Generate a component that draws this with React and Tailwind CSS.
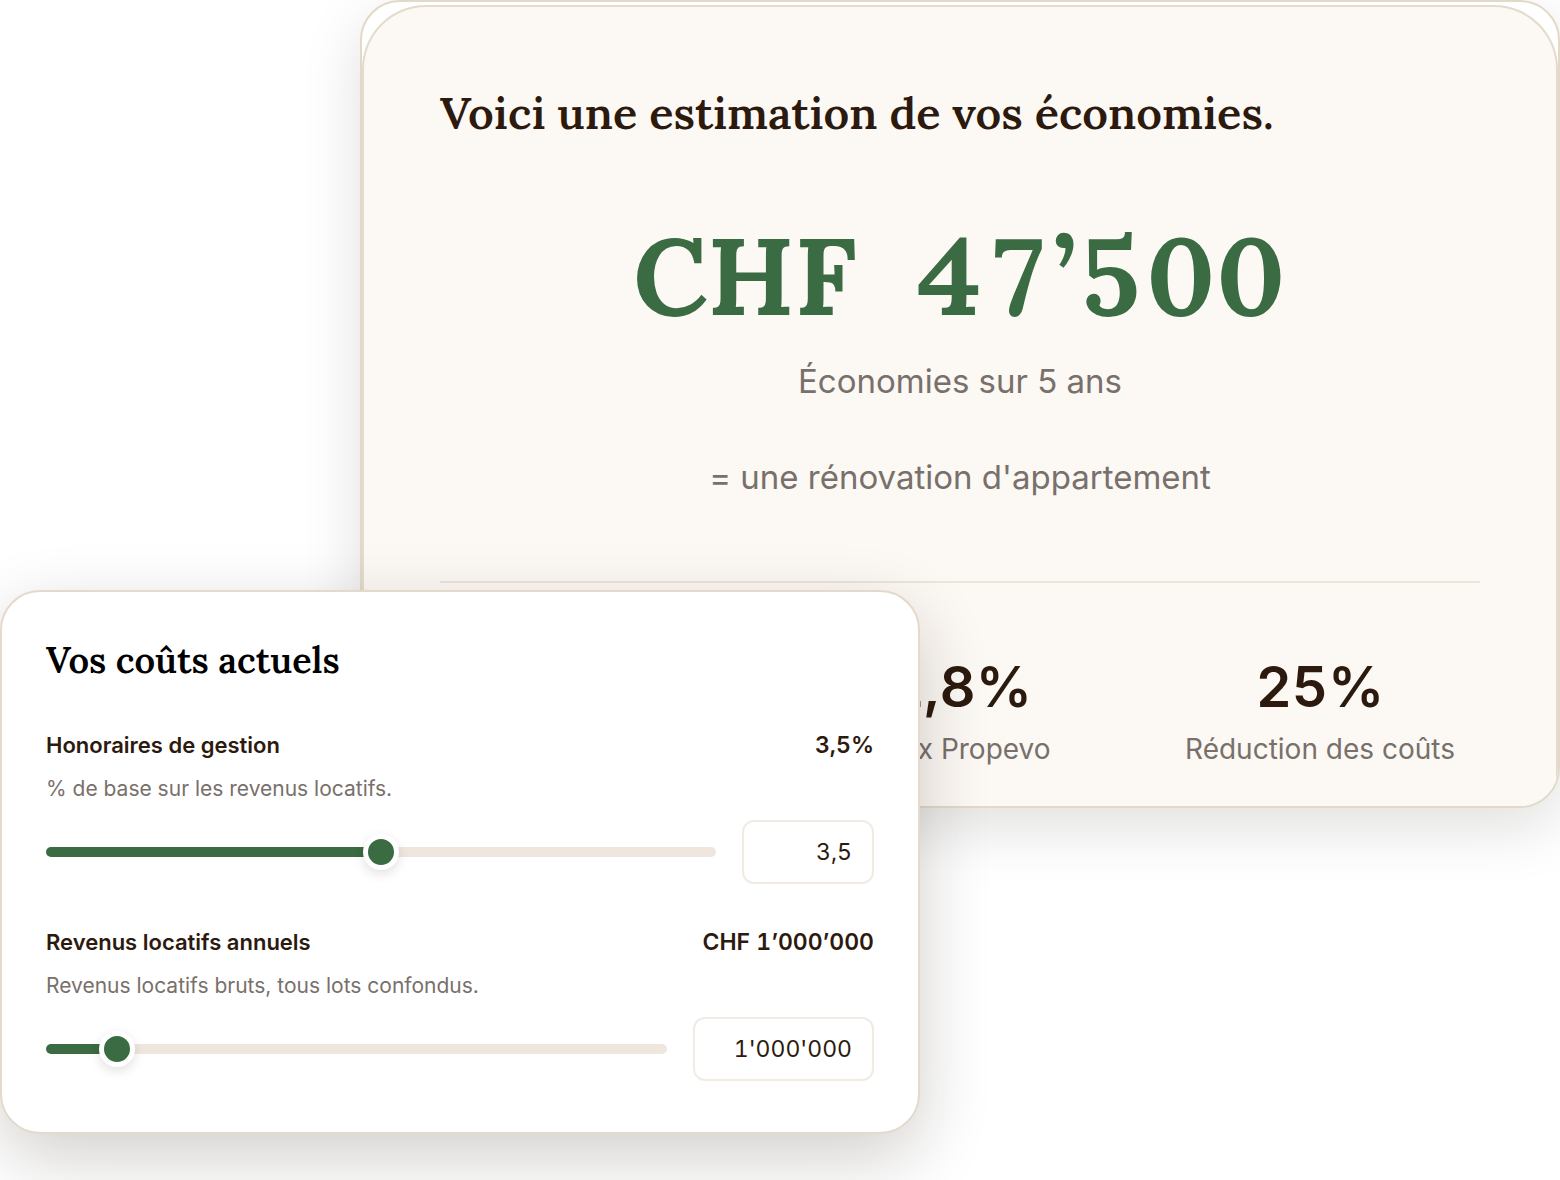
import { useState } from "react";

const formatAmount = (value) => String(value).replace(/\B(?=(\d{3})+(?!\d))/g, "'");
const formatRate = (value) => value.toFixed(1).replace(".", ",");

const stats = [
  { value: "3,5%", label: "Taux actuel" },
  { value: "2,8%", label: "Taux Propevo" },
  { value: "25%", label: "Réduction des coûts" }
];

const fields = [
  {
    id: "fees",
    label: "Honoraires de gestion",
    hint: "% de base sur les revenus locatifs.",
    min: 2,
    max: 5,
    step: 0.1,
    initial: 3.5,
    inputWidth: "w-[132px]",
    display: (value) => `${formatRate(value)}%`,
    format: formatRate
  },
  {
    id: "income",
    label: "Revenus locatifs annuels",
    hint: "Revenus locatifs bruts, tous lots confondus.",
    min: 100000,
    max: 10000000,
    step: 50000,
    initial: 1000000,
    inputWidth: "w-[181px]",
    display: (value) => `CHF ${formatAmount(value).replaceAll("'", "’")}`,
    format: formatAmount
  }
];

function CostField({ field }) {
  const [value, setValue] = useState(field.initial);
  const percent = ((value - field.min) / (field.max - field.min)) * 100;

  return (
    <div>
      <div className="flex items-center justify-between leading-8 font-semibold text-[#2c1a0e]">
        <label htmlFor={field.id} className="text-[22px]">
          {field.label}
        </label>
        <output htmlFor={field.id} className="text-[23px] tabular-nums">
          {field.display(value)}
        </output>
      </div>
      <p className="mt-3 text-[21px] leading-8 text-[#78706b]">{field.hint}</p>
      <div className="mt-[15px] flex items-center gap-[26px]">
        <input
          id={field.id}
          type="range"
          min={field.min}
          max={field.max}
          step={field.step}
          value={value}
          onChange={(event) => setValue(Number(event.target.value))}
          className="h-[10px] min-w-0 flex-1 cursor-pointer appearance-none rounded-full [&::-webkit-slider-thumb]:size-9 [&::-webkit-slider-thumb]:appearance-none [&::-webkit-slider-thumb]:rounded-full [&::-webkit-slider-thumb]:border-[5px] [&::-webkit-slider-thumb]:border-white [&::-webkit-slider-thumb]:bg-[#3a6b42] [&::-webkit-slider-thumb]:shadow-[0_4px_12px_rgba(0,0,0,0.12)]"
          style={{
            background: `linear-gradient(to right, #3a6b42 ${percent}%, #efe7de ${percent}%)`
          }}
        />
        <input
          type="text"
          aria-label={field.label}
          value={field.format(value)}
          readOnly
          className={`h-16 rounded-xl border-2 border-[#f1ebe4] bg-white px-5 text-right text-[23px] text-[#2c1a0e] tabular-nums ${field.inputWidth}`}
        />
      </div>
    </div>
  );
}

function SavingsCard() {
  return (
    <section className="col-start-10 col-end-40 overflow-hidden rounded-[40px] border-2 border-[#e3d9c8] bg-white pt-[3px] shadow-[0_20px_60px_rgba(20,15,10,0.13)]">
      <div className="rounded-t-[64px] border-2 border-b-0 border-[#e3dccc] bg-[#fcf8f4] px-[76px] pt-[74px] pb-[37px]">
        <h1 className="font-['Lora','Liberation_Serif',serif] text-[45px] leading-16 font-semibold text-[#2c1a0e]">
          Voici une estimation de vos économies.
        </h1>
        <div className="mt-[62px] text-center text-[33px] leading-12 text-[#78706b]">
          <p className="font-['Lora','Liberation_Serif',serif] text-[108px] leading-[138px] font-bold whitespace-pre text-[#3a6b42] tabular-nums">
            CHF{"\u00a0\u00a0"}47’500
          </p>
          <p className="mt-3">Économies sur 5 ans</p>
          <p className="mt-12">= une rénovation d'appartement</p>
        </div>
        <dl className="mt-20 grid grid-cols-3 gap-10 border-t-2 border-[#ece5da] pt-[72px] text-center">
          {stats.map((stat) => (
            <div key={stat.label} className="flex flex-col-reverse gap-[10px]">
              <dt className="text-[28px] leading-10 text-[#78706b]">{stat.label}</dt>
              <dd className="text-[56px] leading-16 font-semibold text-[#2c1a0e] tabular-nums">{stat.value}</dd>
            </div>
          ))}
        </dl>
      </div>
    </section>
  );
}

function CostsCard() {
  return (
    <section className="relative col-start-1 col-end-24 -mt-[218px] rounded-[40px] border-2 border-[#e5d9cc] bg-white px-11 pt-11 pb-[51px] shadow-[0_24px_70px_rgba(30,20,12,0.2)]">
      <h2 className="font-['Lora','Liberation_Serif',serif] text-[36px] leading-12 font-semibold text-black">
        Vos coûts actuels
      </h2>
      <div className="mt-[45px] flex flex-col gap-[42px]">
        {fields.map((field) => (
          <CostField key={field.id} field={field} />
        ))}
      </div>
    </section>
  );
}

export default function App() {
  return (
    <main className="grid min-h-screen grid-cols-[repeat(39,minmax(0,1fr))] content-start bg-white font-['Inter',sans-serif]">
      <SavingsCard />
      <CostsCard />
    </main>
  );
}
